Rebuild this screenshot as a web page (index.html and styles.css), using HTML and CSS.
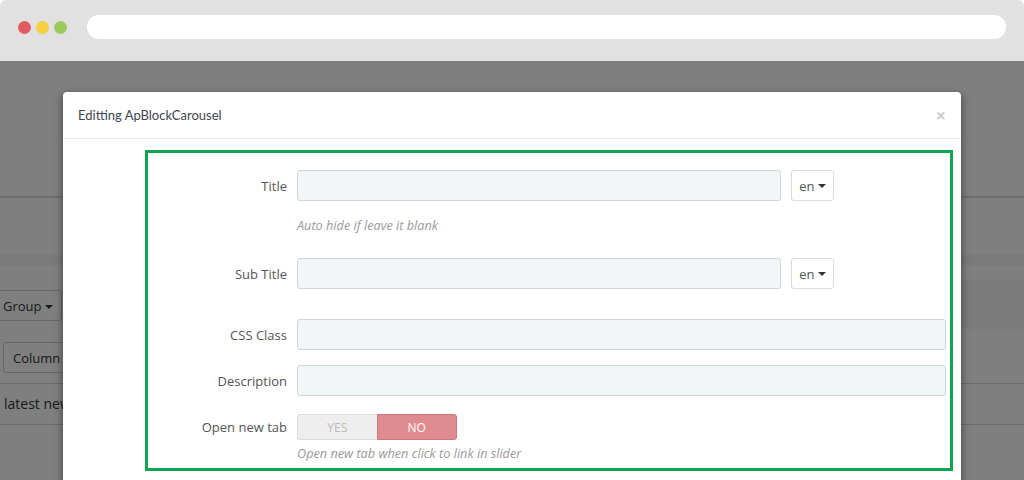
FILE: index.html
```html
<!DOCTYPE html>
<html lang="en">
<head>
    <meta charset="UTF-8">
    <title>Editting ApBlockCarousel</title>
    <link rel="stylesheet" href="styles.css">
</head>
<body>
    <div class="browser">
        <div class="chrome">
            <div class="dots">
                <span class="dot red"></span>
                <span class="dot yellow"></span>
                <span class="dot green"></span>
            </div>
            <div class="address"></div>
        </div>

        <div class="screen">
            <!-- page behind the modal -->
            <div class="page">
                <div class="page-head"></div>
                <div class="page-sub"></div>
                <div class="page-band"></div>
                <div class="toolbar">
                    <div class="toolbar-left">
                        <button class="btn btn-group">Group <span class="caret"></span></button>
                    </div>
                    <div class="toolbar-right"></div>
                </div>
                <div class="col-row">
                    <button class="btn btn-col">Column <span class="caret"></span></button>
                </div>
                <div class="widget-row">latest news</div>
            </div>

            <div class="backdrop"></div>

            <div class="modal-wrap">
                <div class="modal">
                    <div class="modal-header">
                        <h4 class="modal-title">Editting ApBlockCarousel</h4>
                        <span class="close">&times;</span>
                    </div>
                    <div class="modal-body">
                        <div class="form-box">
                            <div class="form-group g-title">
                                <label class="form-label">Title</label>
                                <div class="form-control-wrap">
                                    <div class="lang-row">
                                        <input type="text" class="input input-lang">
                                        <button class="lang-btn">en <span class="caret dark"></span></button>
                                    </div>
                                    <p class="help">Auto hide if leave it blank</p>
                                </div>
                            </div>

                            <div class="form-group g-sub">
                                <label class="form-label">Sub Title</label>
                                <div class="form-control-wrap">
                                    <div class="lang-row">
                                        <input type="text" class="input input-lang">
                                        <button class="lang-btn">en <span class="caret dark"></span></button>
                                    </div>
                                </div>
                            </div>

                            <div class="form-group g-css">
                                <label class="form-label">CSS Class</label>
                                <div class="form-control-wrap">
                                    <input type="text" class="input">
                                </div>
                            </div>

                            <div class="form-group g-desc">
                                <label class="form-label">Description</label>
                                <div class="form-control-wrap">
                                    <input type="text" class="input">
                                </div>
                            </div>

                            <div class="form-group g-tab">
                                <label class="form-label">Open new tab</label>
                                <div class="form-control-wrap">
                                    <div class="switch">
                                        <span class="switch-opt yes">YES</span>
                                        <span class="switch-opt no">NO</span>
                                    </div>
                                    <p class="help help-tab">Open new tab when click to link in slider</p>
                                </div>
                            </div>
                        </div>
                    </div>
                </div>
            </div>
        </div>
    </div>
</body>
</html>
```

FILE: styles.css
```css
/* Base */
body {
    margin: 0;
    background: #fff;
    font-family: "Open Sans", "Liberation Sans", sans-serif;
    color: #555;
}

.browser {
    width: 1024px;
    height: 480px;
    overflow: hidden;
    border-radius: 6px 6px 0 0;
}

/* --- Browser chrome --- */
.chrome {
    height: 61px;
    background: #e1e1e1;
    display: flex;
    align-items: center;
    padding: 0 18px 0 18px;
    box-sizing: border-box;
}
.dots {
    display: flex;
    gap: 5px;
    margin-top: -7px;
}
.dot {
    width: 13px;
    height: 13px;
    border-radius: 50%;
    display: block;
}
.dot.red { background: #df5d5f; }
.dot.yellow { background: #f6cf43; }
.dot.green { background: #9bcb5b; }
.address {
    flex: 1;
    height: 24px;
    margin-left: 20px;
    margin-top: -7px;
    background: #fff;
    border-radius: 12px;
}

/* --- Page behind the modal --- */
.screen {
    position: relative;
    height: 419px;
    overflow: hidden;
}
.page {
    font-size: 13px;
    color: #333;
}
.page-head {
    height: 135px;
    border-bottom: 2px solid #dcdcdc;
}
.page-sub {
    height: 57px;
}
.page-band {
    height: 10px;
    background: #f5f5f5;
}
.toolbar {
    display: flex;
    height: 64px;
}
.toolbar-left {
    width: 200px;
    padding-top: 25px;
}
.toolbar-right {
    flex: 1;
    margin-top: 15px;
    height: 49px;
    background: #f6f6f6;
}
.btn {
    font-family: inherit;
    font-size: 13px;
    color: #333;
    background: #fff;
    border: 1px solid #ccc;
    border-radius: 3px;
    height: 31px;
    padding: 0 8px;
}
.btn-group {
    margin-left: -6px;
}
.col-row {
    height: 55px;
    padding-left: 3px;
    padding-top: 13px;
    box-sizing: border-box;
    border-bottom: 1px solid #d6d6d6;
}
.btn-col {
    padding: 0 9px;
    width: 120px;
    text-align: left;
}
.widget-row {
    height: 40px;
    line-height: 40px;
    padding-left: 4px;
    font-size: 14px;
    border-bottom: 1px solid #d6d6d6;
}
.caret {
    display: inline-block;
    width: 0;
    height: 0;
    vertical-align: middle;
    border-top: 4px solid #333;
    border-left: 4px solid transparent;
    border-right: 4px solid transparent;
}

.backdrop {
    position: absolute;
    inset: 0;
    background: rgba(0, 0, 0, 0.5);
}

/* --- Modal --- */
.modal-wrap {
    position: absolute;
    inset: 0;
    padding-top: 31px;
}
.modal {
    width: 898px;
    height: 420px;
    margin: 0 auto;
    background: #fff;
    border-radius: 4px 4px 0 0;
    box-shadow: 0 3px 9px rgba(0, 0, 0, 0.5);
}
.modal-header {
    display: flex;
    align-items: center;
    justify-content: space-between;
    height: 46px;
    padding: 0 15px;
    border-bottom: 1px solid #e5e5e5;
}
.modal-title {
    margin: 0;
    font-family: "Lato", "Open Sans", sans-serif;
    font-weight: normal;
    font-size: 13px;
    color: #3e4550;
    margin-top: -1px;
}
.close {
    font-size: 18px;
    font-weight: bold;
    color: #000;
    opacity: 0.2;
    line-height: 1;
}

.modal-body {
    padding: 11px 8px 0 82px;
}
.form-box {
    border: 3px solid #0da551;
    padding: 17px 4px 7px 0;
}

/* Form rows */
.form-group {
    display: grid;
    grid-template-columns: 139px 1fr;
    column-gap: 10px;
}
.g-title { margin-bottom: 25px; }
.g-sub { margin-bottom: 30px; }
.g-css { margin-bottom: 15px; }
.g-desc { margin-bottom: 18px; }

.form-label {
    font-size: 13px;
    color: #555;
    text-align: right;
    height: 31px;
    line-height: 32px;
}
.g-tab .form-label {
    height: 26px;
    line-height: 26px;
}

.input {
    display: block;
    width: 100%;
    height: 31px;
    box-sizing: border-box;
    background: #f3f6f7;
    border: 1px solid #cdd6da;
    border-radius: 3px;
    font-family: inherit;
    font-size: 13px;
}
.lang-row {
    display: flex;
    gap: 10px;
}
.input-lang {
    width: 484px;
}
.lang-btn {
    width: 43px;
    height: 31px;
    background: #fff;
    border: 1px solid #dcdcdc;
    border-radius: 3px;
    font-family: inherit;
    font-size: 13px;
    color: #555;
    padding: 0;
}
.caret.dark {
    border-top-color: #333;
    margin-top: -2px;
}

.help {
    margin: 16px 0 0;
    font-size: 12.7px;
    font-style: italic;
    color: #9a9a9a;
    line-height: 16px;
}
.help-tab {
    margin-top: 5px;
}

/* Yes / No switch */
.switch {
    display: flex;
    width: 160px;
    height: 26px;
}
.switch-opt {
    flex: 1;
    display: flex;
    align-items: center;
    justify-content: center;
    font-size: 12px;
    box-sizing: border-box;
}
.switch-opt.yes {
    background: #eeeeee;
    color: #bbb;
    border: 1px solid #dcdcdc;
    border-right: none;
    border-radius: 3px 0 0 3px;
}
.switch-opt.no {
    background: #e08b8f;
    color: #fff;
    border: 1px solid #d07479;
    border-radius: 0 3px 3px 0;
}
```
